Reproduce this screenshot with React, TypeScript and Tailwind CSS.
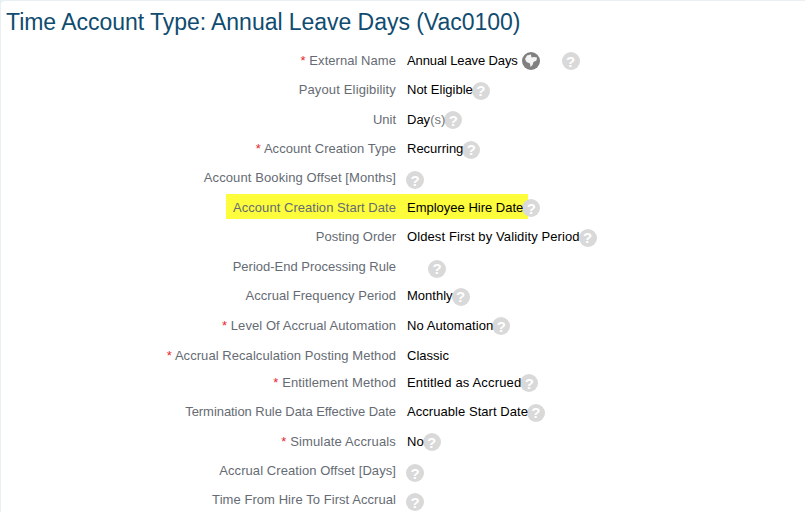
const F = "font-['Liberation_Sans',Arial,sans-serif]";

function Help({ className = "" }: { className?: string }) {
  return (
    <span className={`inline-flex h-[18px] w-[18px] shrink-0 items-center justify-center rounded-full bg-[#d9d9d9] text-[15px] leading-none font-bold text-white ${className}`}>?</span>
  );
}

function Globe() {
  return (
    <svg width="18" height="18" viewBox="0 0 18 18" className="ml-[4px] shrink-0">
      <circle cx="9" cy="9" r="9" fill="#808080" />
      <path d="M3 7 L5 3.5 L9 2.5 L9.5 5.5 L12 5 L15 5.5 L14.5 8.5 L11.5 10 L10.5 13 L8.5 15 L8 11.5 L4.5 10 Z" fill="#f4f4f4" />
    </svg>
  );
}

type Row = { label: string; req?: boolean; value?: React.ReactNode; h: string; extra?: React.ReactNode; mark?: boolean; vt?: string; lt?: string };

const rows: Row[] = [
  { label: "External Name", lt: "tracking-[0.05px]", req: true, h: "h-[30px]", value: "Annual Leave Days", vt: "tracking-[-0.12px]", extra: <><Globe /><Help className="ml-[22px]" /></> },
  { label: "Payout Eligibility", lt: "tracking-[0.15px]", h: "h-[29px]", value: "Not Eligible", extra: <Help className="-ml-[1px]" /> },
  { label: "Unit", h: "h-[30px]", value: <>Day<span className="text-[#777]">(s)</span></>, extra: <Help className="-ml-[1px]" /> },
  { label: "Account Creation Type", lt: "tracking-[0.04px]", req: true, h: "h-[29px]", value: "Recurring", extra: <Help className="-ml-[1px]" /> },
  { label: "Account Booking Offset [Months]", lt: "tracking-[0.1px]", h: "h-[29px]", extra: <Help className="-ml-[1px] mt-[3px]" /> },
  { label: "Account Creation Start Date", lt: "tracking-[0.04px]", h: "h-[30px]", value: "Employee Hire Date", extra: <Help className="-ml-[1px]" />, mark: true },
  { label: "Posting Order", h: "h-[29px]", value: "Oldest First by Validity Period", vt: "tracking-[0.1px]", extra: <Help className="-ml-[1px]" /> },
  { label: "Period-End Processing Rule", h: "h-[30px]", extra: <Help className="ml-[21px] mt-[3px]" /> },
  { label: "Accrual Frequency Period", lt: "tracking-[0.04px]", h: "h-[29px]", value: "Monthly", extra: <Help className="-ml-[1px]" /> },
  { label: "Level Of Accrual Automation", lt: "tracking-[0.07px]", req: true, h: "h-[30px]", value: "No Automation", vt: "tracking-[0.08px]", extra: <Help className="-ml-[1px]" /> },
  { label: "Accrual Recalculation Posting Method", lt: "tracking-[0.06px]", req: true, h: "h-[27px] pt-[3px]", value: "Classic" },
  { label: "Entitlement Method", lt: "tracking-[0.1px]", req: true, h: "h-[30px]", value: "Entitled as Accrued", vt: "tracking-[0.16px]", extra: <Help className="-ml-[1px]" /> },
  { label: "Termination Rule Data Effective Date", lt: "tracking-[-0.06px]", h: "h-[29px]", value: "Accruable Start Date", vt: "tracking-[0.05px]", extra: <Help className="-ml-[1px]" /> },
  { label: "Simulate Accruals", lt: "tracking-[0.15px]", req: true, h: "h-[30px]", value: "No", extra: <Help className="-ml-[1px]" /> },
  { label: "Accrual Creation Offset [Days]", lt: "tracking-[0.07px]", h: "h-[29px]", extra: <Help className="-ml-[1px] mt-[3px]" /> },
  { label: "Time From Hire To First Accrual", lt: "tracking-[0.06px]", h: "h-[29px]", extra: <Help className="-ml-[1px] mt-[3px]" /> },
];

export default function App() {
  return (
    <div className={`h-[512px] w-[805px] overflow-hidden bg-[#e8f0f3] pt-[1px] pl-[1px] ${F}`}>
      <div className="h-full rounded-tl-[4px] bg-white">
        <h1 className="h-[44px] pt-[7px] pl-[5px] text-[23px] leading-[28px] font-normal tracking-[-0.04px] text-[#0f4c70]">
          Time Account Type: Annual Leave Days (Vac0100)
        </h1>
        <div className="flex flex-col pt-[1px]">
          {rows.map((r) => (
            <div key={r.label} className={`relative flex items-center text-[13px] ${r.h}`}>
              {r.mark && <div className="absolute top-[1px] left-[225px] h-[25px] w-[302px] bg-[#fdfd3c]" />}
              <div className={`relative w-[395px] shrink-0 pb-[1px] text-right text-[#666b73] ${r.lt ?? ""}`}>
                {r.req && <span className="text-[#e8262a]">* </span>}
                {r.label}
              </div>
              <div className="relative flex items-center pl-[11px] text-black">
                {r.extra && r.value ? null : null}
                {r.value ? <span className={`relative z-10 pb-[1px] ${r.vt ?? ""}`}>{r.value}</span> : <span className="w-0" />}
                {r.extra}
              </div>
            </div>
          ))}
        </div>
      </div>
    </div>
  );
}
